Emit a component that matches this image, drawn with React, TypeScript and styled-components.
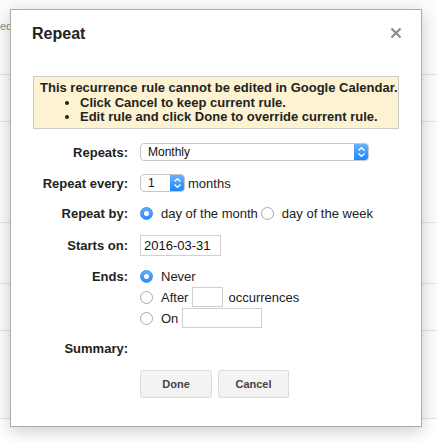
import React from "react";
import styled, { createGlobalStyle } from "styled-components";

const Global = createGlobalStyle`
  html, body { margin: 0; padding: 0; background: #fff; }
  body { font-family: Arial, "Liberation Sans", Helvetica, sans-serif; }
`;

const Page = styled.div`
  position: relative;
  width: 437px;
  height: 442px;
  overflow: hidden;
  background: #fff;
`;

const BgText = styled.div`
  position: absolute;
  left: 0;
  top: 20px;
  font-size: 11px;
  color: #8a8a8a;
`;

const BgRows = styled.div`
  display: flex;
  flex-direction: column;
`;

const BgRow = styled.div<{ $h: number }>`
  height: ${(p) => p.$h}px;
  border-bottom: 1px solid #e2e2e2;
  box-sizing: border-box;
  background: #fcfcfc;
`;

const Dialog = styled.div`
  position: absolute;
  left: 10px;
  top: 9px;
  width: 412px;
  height: 418px;
  box-sizing: border-box;
  background: #fff;
  border: 1px solid #acacac;
  box-shadow: 0 4px 16px rgba(0, 0, 0, 0.2);
  padding: 14px 21px 0 21px;
  display: flex;
  flex-direction: column;
`;

const Header = styled.div`
  display: flex;
  justify-content: space-between;
  align-items: flex-start;
`;

const Title = styled.div`
  font-size: 16px;
  font-weight: bold;
  color: #222;
  line-height: 20px;
`;

const Close = styled.div`
  margin-top: 1px;
  margin-right: -2px;
  width: 12px;
  height: 12px;
`;

const Notice = styled.div`
  margin-top: 32px;
  margin-left: 1px;
  background: #fdf3d2;
  border: 1px solid #cccccc;
  padding: 4px 0 3px 6px;
  width: 366px;
  box-sizing: border-box;
  font-size: 13px;
  font-weight: bold;
  color: #222;
  line-height: 14.5px;
  white-space: nowrap;
`;

const BulletList = styled.ul`
  margin: 0;
  padding: 0 0 0 40px;
  list-style: disc;
`;

const Form = styled.div`
  margin-top: 11px;
  display: grid;
  grid-template-columns: 96px auto;
  column-gap: 12px;
  align-items: center;
  font-size: 13px;
  color: #222;
`;

const Label = styled.div<{ $top?: boolean }>`
  text-align: right;
  font-weight: bold;
  color: #222;
  align-self: ${(p) => (p.$top ? "start" : "center")};
  ${(p) => (p.$top ? "padding-top: 3px;" : "")}
`;

const Cell = styled.div<{ $h: number }>`
  height: ${(p) => p.$h}px;
  display: flex;
  align-items: center;
  gap: 3px;
`;

const Stack = styled.div`
  display: flex;
  flex-direction: column;
`;

const SelectBox = styled.div<{ $w: number }>`
  width: ${(p) => p.$w}px;
  height: 18px;
  box-sizing: border-box;
  border: 1px solid #c6c6c6;
  border-radius: 4px;
  display: flex;
  align-items: center;
  justify-content: space-between;
  padding-left: 7px;
  overflow: hidden;
  background: #fff;
  font-size: 12px;
  color: #111;
`;

const Stepper = styled.div`
  width: 15px;
  height: 18px;
  margin-right: -1px;
  background: linear-gradient(#6ab4fd, #1d83fb);
  display: flex;
  align-items: center;
  justify-content: center;
  border-radius: 0 4px 4px 0;
`;

const Radio = styled.span<{ $on?: boolean }>`
  width: 13px;
  height: 13px;
  border-radius: 50%;
  box-sizing: border-box;
  flex: none;
  display: inline-flex;
  align-items: center;
  justify-content: center;
  background: ${(p) => (p.$on ? "linear-gradient(#5fadfd, #2a8cfb)" : "#fff")};
  border: 1px solid ${(p) => (p.$on ? "#3b8ff4" : "#a9a9a9")};
  margin-right: 8px;
  &::after {
    content: "";
    width: 5px;
    height: 5px;
    border-radius: 50%;
    background: #fff;
    display: ${(p) => (p.$on ? "block" : "none")};
  }
`;

const Opt = styled.span`
  display: inline-flex;
  align-items: center;
  font-size: 13px;
  color: #222;
`;

const TextBox = styled.div<{ $w: number; $h: number }>`
  width: ${(p) => p.$w}px;
  height: ${(p) => p.$h}px;
  box-sizing: border-box;
  border: 1px solid #d0d0d0;
  padding-left: 3px;
  display: flex;
  align-items: center;
  font-size: 13px;
  color: #111;
  margin: 0 5px 0 4px;
`;

const Buttons = styled.div`
  display: flex;
  gap: 6px;
  margin-top: 2px;
`;

const Button = styled.div<{ $w: number }>`
  width: ${(p) => p.$w}px;
  height: 28px;
  box-sizing: border-box;
  border: 1px solid #dcdcdc;
  border-radius: 2px;
  background: linear-gradient(#f5f5f5, #f1f1f1);
  display: flex;
  align-items: center;
  justify-content: center;
  font-size: 11px;
  font-weight: bold;
  color: #444;
`;

const StepIcon = () => (
  <svg width="9" height="12" viewBox="0 0 9 12">
    <path d="M1.5 4.5 L4.5 1.8 L7.5 4.5 M1.5 7.5 L4.5 10.2 L7.5 7.5" fill="none" stroke="#fff" strokeWidth="1.4" />
  </svg>
);

const CloseIcon = () => (
  <svg width="12" height="12" viewBox="0 0 12 12">
    <path d="M1.5 1.5 L10.5 10.5 M10.5 1.5 L1.5 10.5" stroke="#8c8c8c" strokeWidth="2.2" />
  </svg>
);

export default function App() {
  return (
    <Page>
      <Global />
      <BgRows>
        <BgRow $h={75} />
        <BgRow $h={47} />
        <BgRow $h={101} />
        <BgRow $h={61} />
        <BgRow $h={47} />
        <BgRow $h={88} />
      </BgRows>
      <BgText>ed</BgText>
      <Dialog>
        <Header>
          <Title>Repeat</Title>
          <Close>
            <CloseIcon />
          </Close>
        </Header>
        <Notice>
          This recurrence rule cannot be edited in Google Calendar.
          <BulletList>
            <li>Click Cancel to keep current rule.</li>
            <li>Edit rule and click Done to override current rule.</li>
          </BulletList>
        </Notice>
        <Form>
          <Label>Repeats:</Label>
          <Cell $h={25}>
            <SelectBox $w={229}>
              Monthly
              <Stepper>
                <StepIcon />
              </Stepper>
            </SelectBox>
          </Cell>
          <Label>Repeat every:</Label>
          <Cell $h={37}>
            <SelectBox $w={45}>
              1
              <Stepper>
                <StepIcon />
              </Stepper>
            </SelectBox>
            <span>months</span>
          </Cell>
          <Label>Repeat by:</Label>
          <Cell $h={23}>
            <Opt>
              <Radio $on />
              day of the month
            </Opt>
            <Opt>
              <Radio />
              day of the week
            </Opt>
          </Cell>
          <Label>Starts on:</Label>
          <Cell $h={41}>
            <TextBox $w={81} $h={21} style={{ marginLeft: 0 }}>
              2016-03-31
            </TextBox>
          </Cell>
          <Label $top>Ends:</Label>
          <Stack>
            <Cell $h={21}>
              <Opt>
                <Radio $on />
                Never
              </Opt>
            </Cell>
            <Cell $h={21}>
              <Opt>
                <Radio />
                After
                <TextBox $w={31} $h={20} />
                occurrences
              </Opt>
            </Cell>
            <Cell $h={21}>
              <Opt>
                <Radio />
                On
                <TextBox $w={80} $h={20} />
              </Opt>
            </Cell>
          </Stack>
          <Label>Summary:</Label>
          <Cell $h={39} />
          <div />
          <Buttons>
            <Button $w={72}>Done</Button>
            <Button $w={71}>Cancel</Button>
          </Buttons>
        </Form>
      </Dialog>
    </Page>
  );
}
